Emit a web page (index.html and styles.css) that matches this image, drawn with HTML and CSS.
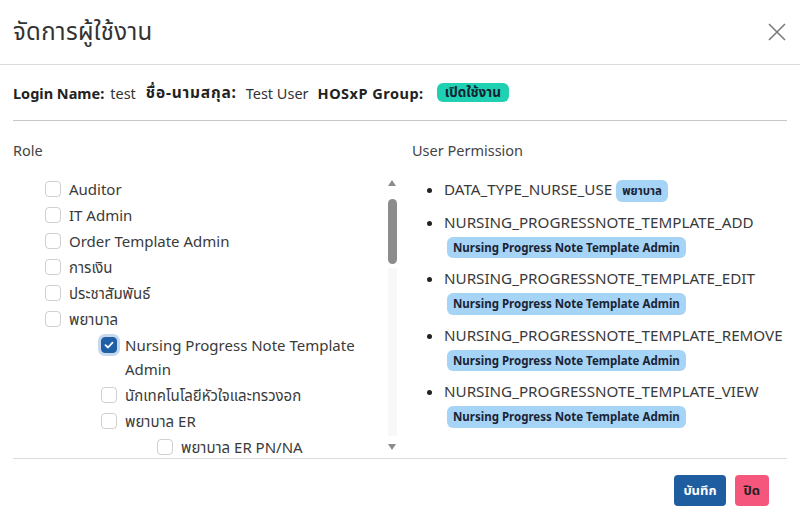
FILE: index.html
```html
<!DOCTYPE html>
<html lang="th">
<head>
<meta charset="utf-8">
<link rel="stylesheet" href="styles.css">
</head>
<body>
<div class="modal">
  <div class="modal-header">
    <h1 class="modal-title">จัดการผู้ใช้งาน</h1>
    <svg class="close" width="18" height="18" viewBox="0 0 18 18"><path d="M1 1 L17 17 M17 1 L1 17" stroke="#7a7a7a" stroke-width="1.6" fill="none"/></svg>
  </div>
  <div class="modal-body">
    <div class="info">
      <b>Login Name:</b><span class="val">test</span>
      <b class="thai">ชื่อ-นามสกุล:</b><span class="val">Test User</span>
      <b class="grp">HOSxP Group:</b><span class="badge badge-green">เปิดใช้งาน</span>
    </div>
    <div class="columns">
      <div class="col">
        <div class="label">Role</div>
        <div class="scrollbox">
          <ul class="roles">
            <li class="lv0"><span class="cb"></span><span>Auditor</span></li>
            <li class="lv0"><span class="cb"></span><span>IT Admin</span></li>
            <li class="lv0"><span class="cb"></span><span>Order Template Admin</span></li>
            <li class="lv0"><span class="cb"></span><span>การเงิน</span></li>
            <li class="lv0"><span class="cb"></span><span>ประชาสัมพันธ์</span></li>
            <li class="lv0"><span class="cb"></span><span>พยาบาล</span></li>
            <li class="lv1"><span class="cb checked"><svg width="10" height="10" viewBox="0 0 10 10"><path d="M1.5 5.2 L4 7.5 L8.5 2.6" stroke="#fff" stroke-width="1.8" fill="none" stroke-linecap="round" stroke-linejoin="round"/></svg></span><span>Nursing Progress Note Template Admin</span></li>
            <li class="lv1"><span class="cb"></span><span>นักเทคโนโลยีหัวใจและทรวงอก</span></li>
            <li class="lv1"><span class="cb"></span><span>พยาบาล ER</span></li>
            <li class="lv2"><span class="cb"></span><span>พยาบาล ER PN/NA</span></li>
          </ul>
          <div class="scrollbar">
            <span class="arrow up"></span>
            <span class="thumb"></span>
            <span class="track"></span>
            <span class="arrow down"></span>
          </div>
        </div>
      </div>
      <div class="col">
        <div class="label">User Permission</div>
        <ul class="perms">
          <li><span>DATA_TYPE_NURSE_USE</span> <span class="badge badge-blue">พยาบาล</span></li>
          <li><span>NURSING_PROGRESSNOTE_TEMPLATE_ADD</span><br><span class="badge badge-blue">Nursing Progress Note Template Admin</span></li>
          <li><span>NURSING_PROGRESSNOTE_TEMPLATE_EDIT</span><br><span class="badge badge-blue">Nursing Progress Note Template Admin</span></li>
          <li><span>NURSING_PROGRESSNOTE_TEMPLATE_REMOVE</span><br><span class="badge badge-blue">Nursing Progress Note Template Admin</span></li>
          <li><span>NURSING_PROGRESSNOTE_TEMPLATE_VIEW</span><br><span class="badge badge-blue">Nursing Progress Note Template Admin</span></li>
        </ul>
      </div>
    </div>
    <div class="footer">
      <button class="btn btn-save">บันทึก</button>
      <button class="btn btn-close">ปิด</button>
    </div>
  </div>
</div>
</body>
</html>
```

FILE: styles.css
```css
* { box-sizing: border-box; }
html, body { margin: 0; padding: 0; background: #fff; }
body {
  font-family: "Noto Sans", "Noto Sans Thai", "Noto Sans CJK SC", sans-serif;
  color: #3a3a3a;
  font-size: 14px;
}
.modal { width: 800px; height: 525px; overflow: hidden; }
.modal-header {
  height: 65px;
  padding: 0 14px 0 13px;
  display: flex;
  align-items: center;
  justify-content: space-between;
  border-bottom: 1px solid #dcdcdc;
}
.modal-title { margin: 0; font-size: 24px; font-weight: 400; color: #333; letter-spacing: 0.3px; }
.close { display: block; }
.modal-body { padding: 0 13px; }
.info {
  height: 56px;
  display: flex;
  align-items: center;
  border-bottom: 1px solid #c8c8c8;
  font-size: 14.5px;
  color: #222;
}
.info b { font-weight: 700; margin-right: 6px; }
.info .val { margin-right: 10px; color: #333; }
.info b.thai { font-size: 15.5px; margin-right: 9px; letter-spacing: 0.8px; }
.info b.grp { letter-spacing: 0.5px; }
.info .val:nth-of-type(2) { margin-right: 9px; }
.badge {
  display: inline-block;
  font-weight: 700;
  border-radius: 6px;
  line-height: 1;
}
.badge-green {
  background: #1fd1b2;
  color: #123;
  font-size: 13.5px;
  padding: 3px 8px;
  margin-left: 7px;
}
.columns {
  display: grid;
  grid-template-columns: 387px 1fr;
  column-gap: 12px;
  padding-top: 20px;
}
.label { font-size: 14.5px; color: #444; line-height: 20px; margin-top: -1px; }
.scrollbox {
  display: flex;
  height: 281px;
  margin-top: 17px;
  overflow: hidden;
}
.roles {
  list-style: none;
  margin: 0;
  padding: 0;
  flex: 1;
  overflow: hidden;
  font-size: 15px;
}
.roles li {
  display: flex;
  align-items: flex-start;
  line-height: 24px;
  margin-bottom: 2px;
}
.roles li > span:last-child { padding-right: 28px; }
.lv0 { padding-left: 32px; }
.lv1 { padding-left: 88px; }
.lv2 { padding-left: 144px; }
.cb {
  flex: none;
  width: 16px;
  height: 16px;
  border: 1px solid #d0d0d0;
  border-radius: 4px;
  margin: 4px 8px 0 0;
  display: flex;
  align-items: center;
  justify-content: center;
}
.cb.checked {
  background: #1f5fa6;
  border-color: #1f5fa6;
  box-shadow: 0 0 0 3px #c5d8ee;
}
.scrollbar {
  flex: none;
  width: 13px;
  display: flex;
  flex-direction: column;
  align-items: center;
  padding-right: 3px;
}
.arrow { width: 0; height: 0; border-left: 4px solid transparent; border-right: 4px solid transparent; }
.arrow.up { border-bottom: 6px solid #8c8c8c; margin-top: 3px; }
.arrow.down { border-top: 6px solid #8c8c8c; margin-top: auto; margin-bottom: 8px; }
.thumb { width: 9px; height: 65px; background: #8c8c8c; border-radius: 5px; margin-top: 13px; }
.track { width: 9px; flex: 1; max-height: 168px; background: #f8f8f8; margin-top: 4px; }
.perms {
  list-style: disc;
  margin: 17px 0 0 0;
  padding-left: 32px;
  font-size: 15.2px;
  line-height: 24px;
}
.perms li { margin-bottom: 8px; }
.perms li::marker { color: #222; }
.badge-blue {
  background: #a6d4f6;
  color: #1a2333;
  font-size: 11.5px;
  padding: 5px 6px;
  border-radius: 6px;
  margin-left: 3px;
}
.perms li:first-child .badge-blue { margin-left: 0; }
.footer {
  border-top: 1px solid #dcdcdc;
  display: flex;
  justify-content: flex-end;
  gap: 9px;
  padding: 16px 18px 0 0;
}
.btn {
  border: none;
  border-radius: 4px;
  height: 31px;
  padding: 0 9px;
  font-family: inherit;
  font-weight: 700;
  font-size: 13px;
}
.btn-save { background: #1e5ea0; color: #fff; }
.btn-close { background: #f5567c; color: #222; }
```
